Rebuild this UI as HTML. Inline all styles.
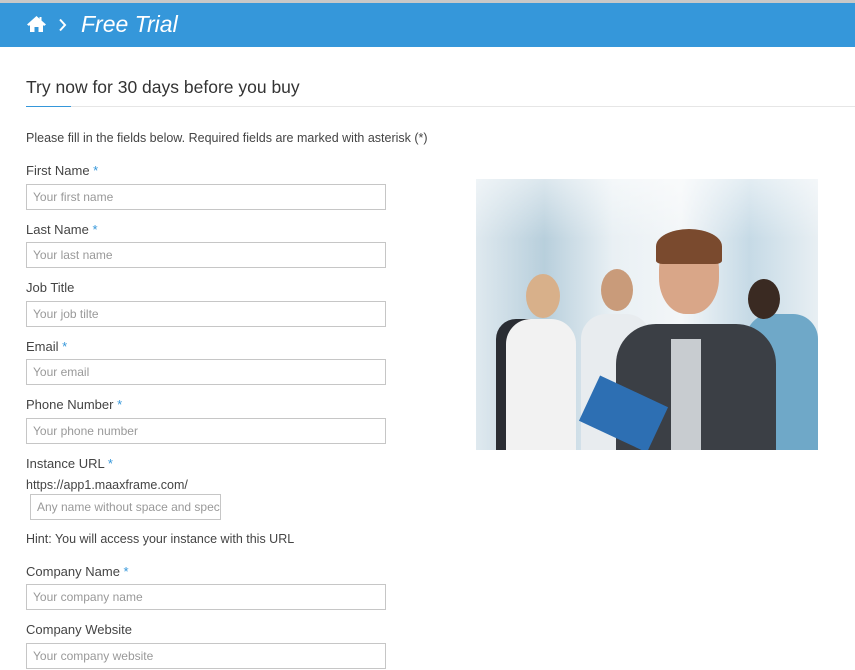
<!DOCTYPE html>
<html><head><meta charset="utf-8"><style>
body{margin:0;width:855px;height:670px;overflow:hidden;background:#fff;font-family:"Liberation Sans",sans-serif;position:relative}
.a{position:absolute}
.top{left:0;top:0;width:855px;height:3px;background:#c8c8c8}
.bar{left:0;top:3px;width:855px;height:44px;background:#3597da}
.lbl{left:26px;font-size:13px;color:#444}
.lbl b{color:#3597da;font-weight:normal}
.in{left:26px;font-size:12px;color:#999;line-height:24px;padding-left:6px;box-sizing:border-box;width:360px;height:26px;border:1px solid #c6c6c6}
.sm{font-size:12.5px;color:#444}
</style></head><body>
<div class="a top"></div>
<div class="a bar"></div>
<svg class="a" style="left:26px;top:15px" width="21" height="18" viewBox="0 0 21 18"><path d="M10.5 1 L1 9.5 L3 11 L4 10 V17 H8.5 V12 H12.5 V17 H17 V10 L18 11 L20 9.5 L15.5 5.5 V2 H13.5 V3.7 Z" fill="#fff"/></svg>
<svg class="a" style="left:58px;top:18px" width="9" height="14" viewBox="0 0 9 14"><path d="M2 1.5 L7 7 L2 12.5" stroke="#fff" stroke-width="2" fill="none"/></svg>
<div class="a" style="left:81px;top:11px;font-size:23px;font-style:italic;color:#fff">Free Trial</div>
<div class="a" style="left:26px;top:77px;font-size:17.5px;color:#333">Try now for 30 days before you buy</div>
<div class="a" style="left:26px;top:106px;width:829px;height:1px;background:#e6e6e6"></div>
<div class="a" style="left:26px;top:106px;width:45px;height:1px;background:#3597da"></div>
<div class="a sm" style="left:26px;top:131px">Please fill in the fields below. Required fields are marked with asterisk (*)</div>

<div class="a lbl" style="top:163px">First Name <b>*</b></div>
<div class="a in" style="top:184px">Your first name</div>
<div class="a lbl" style="top:222px">Last Name <b>*</b></div>
<div class="a in" style="top:242px">Your last name</div>
<div class="a lbl" style="top:280px">Job Title</div>
<div class="a in" style="top:301px">Your job tilte</div>
<div class="a lbl" style="top:339px">Email <b>*</b></div>
<div class="a in" style="top:359px">Your email</div>
<div class="a lbl" style="top:397px">Phone Number <b>*</b></div>
<div class="a in" style="top:418px">Your phone number</div>
<div class="a lbl" style="top:456px">Instance URL <b>*</b></div>
<div class="a sm" style="left:26px;top:478px">https://app1.maaxframe.com/</div>
<div class="a in" style="left:30px;top:494px;width:191px;overflow:hidden;white-space:nowrap">Any name without space and special</div>
<div class="a sm" style="left:26px;top:532px">Hint: You will access your instance with this URL</div>
<div class="a lbl" style="top:564px">Company Name <b>*</b></div>
<div class="a in" style="top:584px">Your company name</div>
<div class="a lbl" style="top:622px">Company Website</div>
<div class="a in" style="top:643px">Your company website</div>

<div class="a" style="left:476px;top:179px;width:342px;height:271px;overflow:hidden;background:linear-gradient(90deg,#dfe9ef 0%,#b8cfdc 20%,#e9f0f4 40%,#f3f6f8 60%,#c6dae6 80%,#e8eff3 100%)">
 <div class="a" style="left:0;top:0;width:342px;height:60px;background:linear-gradient(180deg,rgba(255,255,255,.5),rgba(255,255,255,0))"></div>
 <div class="a" style="left:20px;top:140px;width:60px;height:131px;background:#2a2d33;border-radius:20px 20px 0 0"></div>
 <div class="a" style="left:30px;top:140px;width:70px;height:131px;background:#f2f2f2;border-radius:25px 25px 0 0"></div>
 <div class="a" style="left:50px;top:95px;width:34px;height:44px;background:#d8b08a;border-radius:50%"></div>
 <div class="a" style="left:105px;top:135px;width:70px;height:136px;background:#e8ecef;border-radius:25px 25px 0 0"></div>
 <div class="a" style="left:125px;top:90px;width:32px;height:42px;background:#c99b7a;border-radius:50%"></div>
 <div class="a" style="left:270px;top:135px;width:72px;height:136px;background:#6fa8c8;border-radius:25px 25px 0 0"></div>
 <div class="a" style="left:272px;top:100px;width:32px;height:40px;background:#3a2a22;border-radius:50%"></div>
 <div class="a" style="left:140px;top:145px;width:160px;height:126px;background:#3b3f45;border-radius:40px 40px 0 0"></div>
 <div class="a" style="left:195px;top:160px;width:30px;height:111px;background:#c8ccd0"></div>
 <div class="a" style="left:183px;top:55px;width:60px;height:80px;background:#d9a688;border-radius:45%"></div>
 <div class="a" style="left:180px;top:50px;width:66px;height:35px;background:#7a4a2e;border-radius:50% 50% 10% 10%"></div>
 <div class="a" style="left:110px;top:210px;width:75px;height:50px;background:#2d6fb3;transform:rotate(25deg)"></div>
</div>
</body></html>
